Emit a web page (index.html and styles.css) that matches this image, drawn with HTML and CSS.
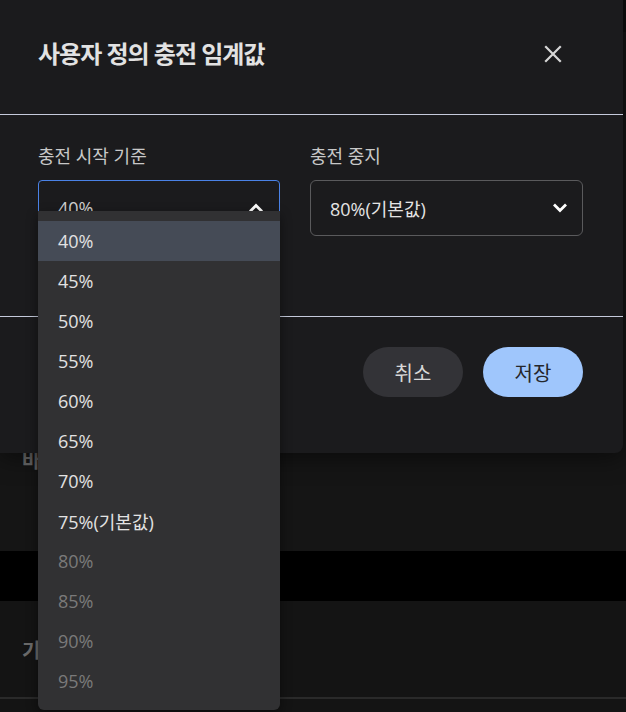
FILE: index.html
```html
<!DOCTYPE html>
<html lang="ko">
<head>
<meta charset="utf-8">
<title>사용자 정의 충전 임계값</title>
<link rel="stylesheet" href="styles.css">
</head>
<body>
<div class="page">
  <section class="card card-top"><h2 class="card-title">바</h2></section>
  <div class="band"></div>
  <section class="card card-second"><h2 class="card-title">기</h2></section>
  <div class="card-rest"></div>
</div>

<div class="scroll-thumb"></div>

<div class="dialog" role="dialog">
  <header class="dialog-header">
    <h1 class="dialog-title">사용자 정의 충전 임계값</h1>
    <button class="close-btn" aria-label="닫기">
      <svg width="18" height="18" viewBox="0 0 18 18"><path d="M2 2 L16 16 M16 2 L2 16" stroke="#d6d6d6" stroke-width="2.2" stroke-linecap="square" fill="none"/></svg>
    </button>
  </header>
  <div class="dialog-body">
    <div class="field field-start">
      <label class="field-label">충전 시작 기준</label>
      <div class="select-wrap">
        <div class="select select-open">
          <span class="select-value">40%</span>
          <svg class="chev" width="16" height="10" viewBox="0 0 16 10"><path d="M2 8.5 L8 2.5 L14 8.5" stroke="#fff" stroke-width="2.8" fill="none"/></svg>
        </div>
        <ul class="menu">
          <li class="opt opt-active">40%</li>
          <li class="opt">45%</li>
          <li class="opt">50%</li>
          <li class="opt">55%</li>
          <li class="opt">60%</li>
          <li class="opt">65%</li>
          <li class="opt">70%</li>
          <li class="opt">75%(기본값)</li>
          <li class="opt opt-disabled">80%</li>
          <li class="opt opt-disabled">85%</li>
          <li class="opt opt-disabled">90%</li>
          <li class="opt opt-disabled">95%</li>
        </ul>
      </div>
    </div>
    <div class="field field-stop">
      <label class="field-label">충전 중지</label>
      <div class="select">
        <span class="select-value">80%(기본값)</span>
        <svg class="chev" width="16" height="10" viewBox="0 0 16 10"><path d="M2 1.5 L8 7.5 L14 1.5" stroke="#fff" stroke-width="2.8" fill="none"/></svg>
      </div>
    </div>
  </div>
  <footer class="dialog-footer">
    <button class="btn btn-cancel">취소</button>
    <button class="btn btn-save">저장</button>
  </footer>
</div>
</body>
</html>
```

FILE: styles.css
```css
* { box-sizing: border-box; }
html, body { margin: 0; padding: 0; }
body {
  background: #141414;
  font-family: "Open Sans", "Noto Sans CJK KR", sans-serif;
  width: 626px;
  height: 712px;
  overflow: hidden;
  position: relative;
}

/* background page (dimmed) */
.page { display: flex; flex-direction: column; }
.card { background: #151515; padding-left: 22px; }
.card-top { height: 551px; padding-top: 447px; }
.band { height: 50px; background: #000; }
.card-second { height: 96px; background: #141414; padding-top: 36px; }
.card-rest { height: 20px; background: #141414; border-top: 2px solid #2a2a2a; }
.card-title {
  margin: 0;
  font-size: 20px;
  line-height: 28px;
  font-weight: 700;
  color: #6a6a6a;
}

.scroll-thumb {
  position: absolute;
  top: 0;
  right: 0;
  width: 3px;
  height: 32px;
  background: #0b0b0b;
  z-index: 2;
}

/* dialog */
.dialog {
  position: absolute;
  top: 0;
  left: 0;
  width: 623px;
  background: #1b1b1d;
  border-radius: 0 0 8px 0;
  box-shadow: 0 4px 24px rgba(0,0,0,0.5);
  z-index: 1;
}
.dialog-header {
  height: 115px;
  display: flex;
  align-items: center;
  justify-content: space-between;
  padding: 0 61px 7px 38px;
  border-bottom: 1px solid #c5cadb;
}
.dialog-title {
  margin: 0;
  font-size: 24px;
  line-height: 32px;
  font-weight: 700;
  color: #e2e2e2;
  letter-spacing: -1px;
}
.close-btn {
  width: 18px;
  height: 18px;
  padding: 0;
  border: 0;
  background: none;
  display: flex;
}

.dialog-body {
  display: flex;
  gap: 30px;
  padding: 28px 0 80px 38px;
}
.field { display: flex; flex-direction: column; gap: 11px; }
.field-start { width: 242px; }
.field-stop { width: 273px; }
.field-label {
  font-size: 18px;
  line-height: 26px;
  color: #c8c8c8;
}
.select-wrap { position: relative; }
.select {
  height: 56px;
  border: 1px solid #5a5a5c;
  border-radius: 6px;
  display: flex;
  align-items: center;
  justify-content: space-between;
  padding: 0 14px 0 19px;
}
.select-open { border-color: #4a82e6; border-radius: 4px; }
.select-value {
  font-size: 18px;
  color: #e4e4e4;
}
.select-open .select-value { color: #cfcfcf; }
.chev { display: block; }
.select-open .chev { margin-right: 1px; }

/* dropdown menu */
.menu {
  position: absolute;
  top: 31px;
  left: 0;
  width: 242px;
  margin: 0;
  padding: 10px 0 9px;
  list-style: none;
  background: #313133;
  border-radius: 0 0 6px 6px;
  box-shadow: 0 4px 12px rgba(0,0,0,0.45);
  z-index: 5;
}
.opt {
  height: 40px;
  display: flex;
  align-items: center;
  padding-left: 20px;
  font-size: 18px;
  color: #e2e2e2;
}
.opt-active { background: #454b56; }
.opt-disabled { color: #7a7a7a; }

/* footer */
.dialog-footer {
  border-top: 1px solid #c5cadb;
  display: flex;
  justify-content: flex-end;
  gap: 20px;
  padding: 30px 40px 56px 0;
}
.btn {
  width: 100px;
  height: 50px;
  border: 0;
  border-radius: 25px;
  font-family: "Open Sans", "Noto Sans CJK KR", sans-serif;
  font-size: 20px;
}
.btn-cancel { background: #333337; color: #d8d8d8; }
.btn-save { background: #9fc6fc; color: #25272b; }
```
